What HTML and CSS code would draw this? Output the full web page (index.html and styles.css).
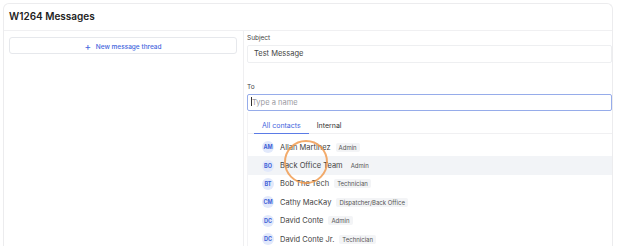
FILE: index.html
```html
<!DOCTYPE html>
<html lang="en">
<head>
  <meta charset="UTF-8" />
  <title>W1264 Messages</title>
  <link rel="stylesheet" href="styles.css">
</head>
<body>
  <div class="card">
    <div class="card-header">W1264 Messages</div>

    <div class="card-body">
      <!-- Thread list -->
      <div class="threads">
        <button class="new-thread"><span class="plus">+</span> New message thread</button>
      </div>

      <!-- Compose -->
      <div class="compose">
        <label class="field-label">Subject</label>
        <div class="input">Test Message</div>

        <label class="field-label to-label">To</label>
        <div class="input input-focus"><span class="caret"></span><span class="placeholder">Type a name</span></div>

        <div class="dropdown">
          <div class="tabs">
            <span class="tab active">All contacts</span>
            <span class="tab">Internal</span>
          </div>
          <div class="contact-list">
            <div class="contact"><span class="avatar">AM</span><span class="name">Allan Martinez</span><span class="role">Admin</span></div>
            <div class="contact hover"><span class="avatar">BO</span><span class="name">Back Office Team</span><span class="role">Admin</span></div>
            <div class="contact"><span class="avatar">BT</span><span class="name">Bob The Tech</span><span class="role">Technician</span></div>
            <div class="contact"><span class="avatar">CM</span><span class="name">Cathy MacKay</span><span class="role">Dispatcher/Back Office</span></div>
            <div class="contact"><span class="avatar">DC</span><span class="name">David Conte</span><span class="role">Admin</span></div>
            <div class="contact"><span class="avatar">DC</span><span class="name">David Conte Jr.</span><span class="role">Technician</span></div>
          </div>
        </div>
      </div>
    </div>
  </div>

  <!-- click marker -->
  <div class="click-ring"></div>
</body>
</html>
```

FILE: styles.css
```css
body {
  margin: 0;
  padding: 3px 0 0 3px;
  font-family: Inter, "Noto Sans", sans-serif;
  background: #fff;
  color: #333;
  overflow: hidden;
  height: 246px;
  box-sizing: border-box;
  position: relative;
}
.card {
  width: 610px;
  height: 243px;
  border: 1px solid #ececee;
  border-bottom: none;
  border-radius: 6px 6px 0 0;
  box-sizing: border-box;
  overflow: hidden;
}
.card-header {
  height: 26px;
  line-height: 24px;
  padding-left: 5px;
  font-size: 10px;
  font-weight: 600;
  color: #222;
  border-bottom: 1px solid #f0f0f2;
}
.card-body {
  display: flex;
  height: 100%;
}
.threads {
  width: 240px;
  flex-shrink: 0;
  border-right: 1px solid #efeff1;
  padding: 6px 6px 0 5px;
  box-sizing: border-box;
}
.new-thread {
  display: block;
  width: 100%;
  height: 17px;
  border: 1px solid #e6e8ec;
  border-radius: 3px;
  background: #fff;
  color: #4466dd;
  font-family: inherit;
  font-size: 6.5px;
  font-weight: 500;
  padding: 0;
  margin: 0;
}
.new-thread .plus {
  font-size: 10px;
  font-weight: 400;
  vertical-align: -1px;
  margin-right: 3px;
}
.compose {
  flex: 1;
  padding: 3px 0 0 3px;
  display: flex;
  flex-direction: column;
}
.field-label {
  font-size: 6.5px;
  color: #444;
  line-height: 9px;
}
.to-label {
  margin-top: 20px;
}
.input {
  margin-top: 2px;
  height: 18px;
  flex-shrink: 0;
  border: 1px solid #eeeff1;
  border-radius: 2px;
  box-sizing: border-box;
  font-size: 7.5px;
  line-height: 16px;
  padding-left: 6px;
  color: #444;
}
.input-focus {
  height: 17px;
  line-height: 15px;
  border-color: #96acea;
  padding-left: 3px;
}
.caret {
  display: inline-block;
  width: 1px;
  height: 9px;
  background: #333;
  vertical-align: -1px;
}
.placeholder {
  color: #9a9a9f;
}
.dropdown {
  margin-top: 1px;
  border-left: 1px solid #f3f3f5;
}
.tabs {
  display: flex;
  height: 22px;
  box-sizing: border-box;
  border-bottom: 1px solid #f0f0f2;
  padding-left: 6px;
  font-size: 7px;
}
.tab {
  padding: 9px 8px 0;
  line-height: 9px;
  color: #333;
}
.tab.active {
  color: #4466dd;
  border-bottom: 1px solid #5b7be6;
  margin-bottom: -1px;
}
.contact-list {
  padding-top: 4px;
}
.contact {
  display: flex;
  align-items: center;
  height: 18.4px;
  padding-left: 14px;
  font-size: 7.5px;
}
.contact.hover {
  background: #f2f4f7;
}
.avatar {
  width: 12px;
  height: 12px;
  border-radius: 50%;
  background: #e2e9fb;
  color: #3d5fd6;
  font-size: 5.5px;
  font-weight: 700;
  display: flex;
  align-items: center;
  justify-content: center;
  margin-right: 6px;
}
.name {
  color: #444;
}
.role {
  margin-left: 5px;
  background: #f3f4f6;
  color: #555;
  font-size: 6px;
  padding: 1px 3px;
  border-radius: 2px;
}
.click-ring {
  position: absolute;
  left: 284px;
  top: 140px;
  width: 44px;
  height: 44px;
  border: 2px solid rgba(240, 150, 70, 0.8);
  border-radius: 50%;
  box-sizing: border-box;
}
```
